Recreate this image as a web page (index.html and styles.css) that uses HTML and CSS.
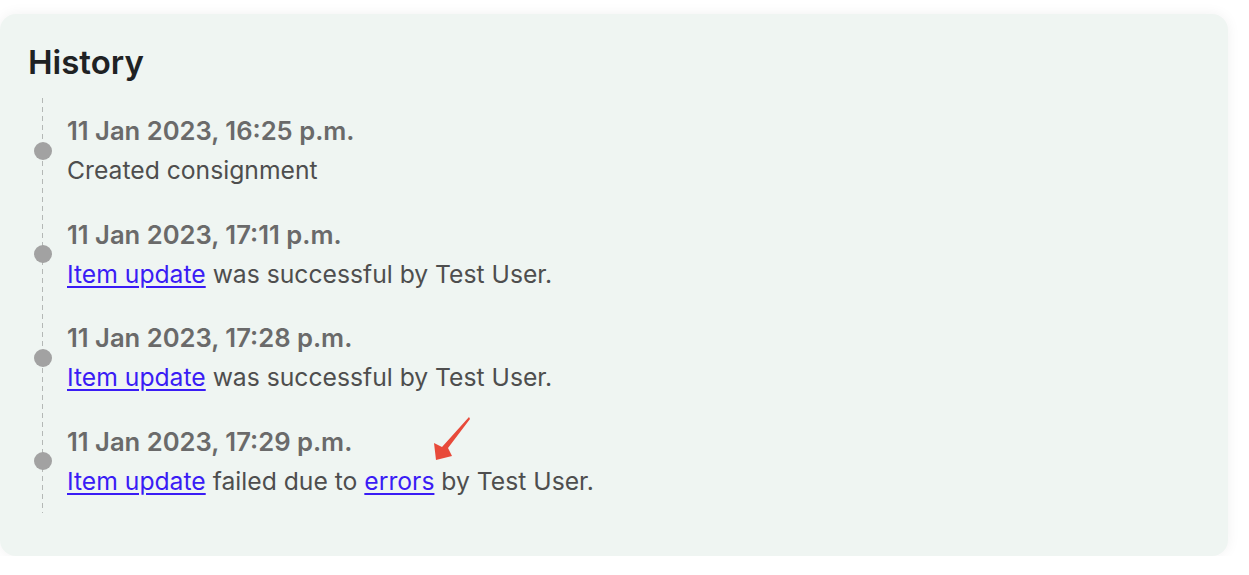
FILE: index.html
```html
<!DOCTYPE html>
<html lang="en">
<head>
<meta charset="utf-8">
<title>History</title>
<link rel="stylesheet" href="styles.css">
</head>
<body>
<section class="card">
  <h2 class="title">History</h2>
  <ol class="timeline">
    <li class="item">
      <span class="dot"></span>
      <div class="entry">
        <div class="date">11 Jan 2023, 16:25 p.m.</div>
        <div class="text">Created consignment</div>
      </div>
    </li>
    <li class="item">
      <span class="dot"></span>
      <div class="entry">
        <div class="date">11 Jan 2023, 17:11 p.m.</div>
        <div class="text"><a href="#">Item update</a> was successful by Test User.</div>
      </div>
    </li>
    <li class="item">
      <span class="dot"></span>
      <div class="entry">
        <div class="date">11 Jan 2023, 17:28 p.m.</div>
        <div class="text"><a href="#">Item update</a> was successful by Test User.</div>
      </div>
    </li>
    <li class="item">
      <span class="dot"></span>
      <div class="entry">
        <div class="date">11 Jan 2023, 17:29 p.m.</div>
        <div class="text"><a href="#">Item update</a> failed due to <a href="#">errors</a> by Test User.</div>
      </div>
    </li>
  </ol>
  <svg class="arrow" width="45" height="52" viewBox="0 0 45 52" aria-hidden="true">
    <polygon points="39,5 40,7 18,36 22,44 6,48 4,31 12,35" fill="#e84a3a"/>
  </svg>
</section>
</body>
</html>
```

FILE: styles.css
```css
html, body {
  margin: 0;
  padding: 0;
  background: #ffffff;
}

body {
  font-family: Inter, "Noto Sans", sans-serif;
  padding: 14px 21px 0 0;
}

.card {
  position: relative;
  box-sizing: border-box;
  width: 1228px;
  height: 542px;
  background: #eff5f2;
  border-radius: 16px;
  box-shadow: 0 0 14px rgba(0, 0, 0, 0.06);
  padding: 28px 0 0 28px;
}

.title {
  margin: 0 0 16px;
  font-size: 33px;
  line-height: 40px;
  font-weight: 600;
  color: #1f2224;
}

.timeline {
  list-style: none;
  margin: 0;
  padding: 18px 0 17px;
  display: flex;
  flex-direction: column;
  gap: 34.5px;
  width: 760px;
  background-image: linear-gradient(#b4b8b6 55%, transparent 55%);
  background-size: 1px 9px;
  background-repeat: repeat-y;
  background-position: 14px 0;
}

.item {
  display: flex;
  align-items: center;
  gap: 15px;
}

.dot {
  flex: none;
  width: 18px;
  height: 18px;
  margin-left: 6px;
  border-radius: 50%;
  background: #a2a2a2;
}

.entry {
  display: flex;
  flex-direction: column;
  gap: 9px;
}

.date {
  font-size: 25.6px;
  line-height: 30px;
  font-weight: 600;
  color: #6a6a6a;
}

.text {
  font-size: 24.7px;
  line-height: 30px;
  color: #4e4e4e;
}

.text a {
  color: #3a1cf5;
  text-decoration: underline;
  text-underline-offset: 3px;
}

.arrow {
  position: absolute;
  left: 430px;
  top: 398px;
}
```
